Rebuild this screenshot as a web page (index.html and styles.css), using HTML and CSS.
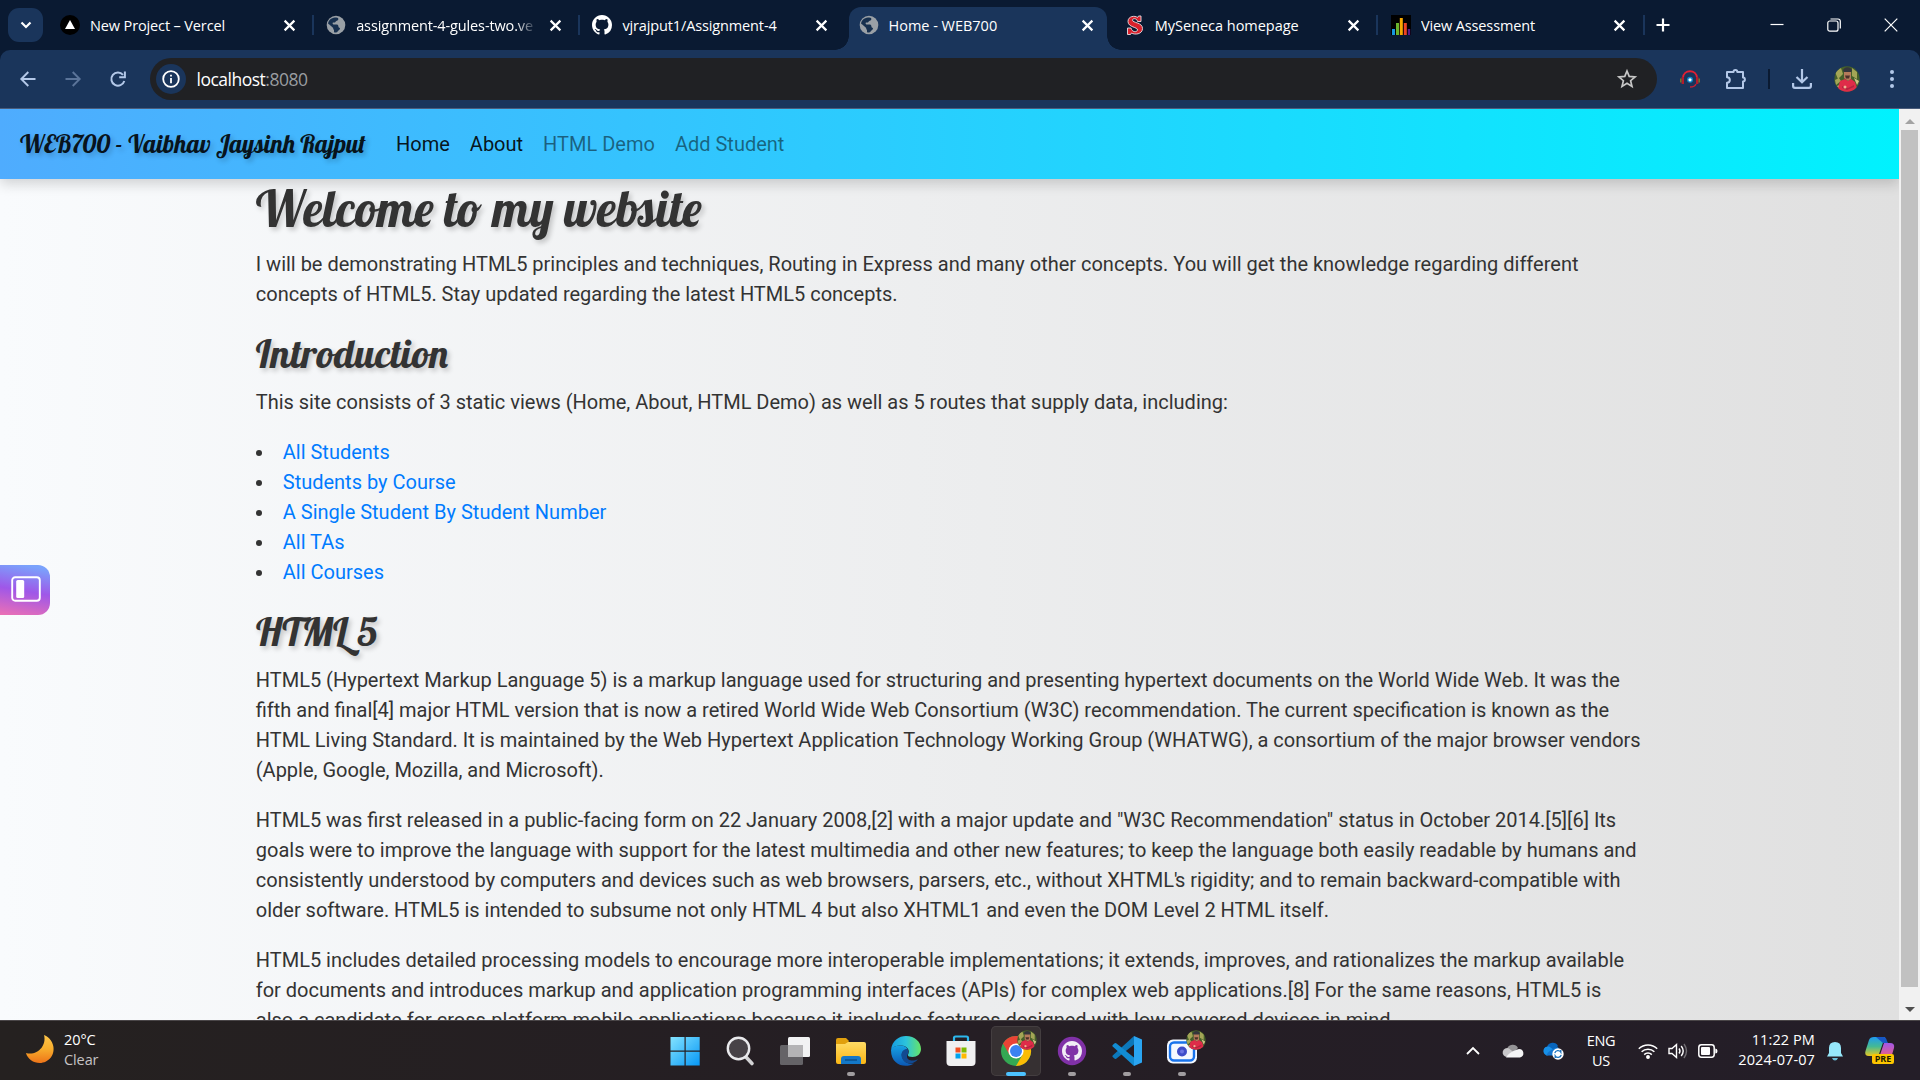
FILE: index.html
```html
<!DOCTYPE html>
<html lang="en">
<head>
<meta charset="utf-8">
<title>Home - WEB700</title>
<link rel="stylesheet" href="styles.css">
</head>
<body>
<svg class="defs" aria-hidden="true">
  <symbol id="x" viewBox="0 0 12 12"><path d="M1.5 1.5l9 9M10.500 1.500l-9 9" stroke="#fff" stroke-width="2" fill="none"/></symbol>
  <symbol id="globe" viewBox="0 0 20 20"><circle cx="10" cy="10" r="9.300" fill="#9aa0a6"/><path d="M9 2.500c3-.5 4 1 3 2.500-.5 1-2 .6-2.500 1.800-.4 1-1.500.8-2.300.8-1 .2-.6 1.600.2 1.800h3.400c1.600.2 1.600 1.400 1.700 2.500.2.900 1.600.5 1.500 1.700-.2 1.500-1.700 1.700-2.400 3-.5.900-1.600 1.200-3.600.6V14.500c-1 0-1.800-.6-1.900-1.800L2 9c.3-3.300 3-6.300 7-6.500z" fill="#17304f"/><path d="M2.200 8.500l5 4.500v4.300c-3.500-1.200-5.500-4.500-5-8.800z" fill="#9aa0a6"/></symbol>
  <symbol id="octocat" viewBox="0 0 16 16"><path d="M8 0C3.580 0 0 3.580 0 8c0 3.540 2.290 6.530 5.470 7.590.4.070.55-.17.55-.38 0-.19-.01-.82-.01-1.490-2.010.37-2.530-.49-2.690-.94-.09-.23-.48-.94-.82-1.130-.28-.15-.68-.52-.01-.53.63-.01 1.080.58 1.230.82.72 1.210 1.870.87 2.330.66.070-.52.28-.87.51-1.070-1.780-.2-3.640-.89-3.640-3.950 0-.87.31-1.590.82-2.150-.08-.2-.36-1.020.08-2.120 0 0 .67-.21 2.200.82.64-.18 1.320-.27 2-.27s1.360.09 2 .27c1.530-1.040 2.200-.82 2.200-.82.44 1.100.16 1.920.08 2.120.51.56.82 1.270.82 2.150 0 3.070-1.870 3.750-3.650 3.950.29.25.54.73.54 1.480 0 1.070-.01 1.930-.01 2.200 0 .21.15.46.55.38A8 8 0 0 0 16 8c0-4.420-3.580-8-8-8z"/></symbol>
  <symbol id="face" viewBox="0 0 26 26"><clipPath id="fc"><circle cx="13" cy="13" r="12.700"/></clipPath><g clip-path="url(#fc)"><path d="M0 0h26v26H0z" fill="#45602a"/><path d="M1 6l6-4 2 6-5 5zM18 2l5 4v7l-5-3zM1 14l4-2 2 3-5 4z" fill="#a3a556"/><path d="M20 12l5 3-2 4zM3 20l3-1v4z" fill="#d0c487"/><path d="M10 5h7v8l-3 2-4-3z" fill="#b57b5b"/><path d="M9 5c0-5 9-5 9 0l-1 1h-7z" fill="#34363c"/><path d="M11 9.500h5l-1 3h-3z" fill="#4c302a"/><path d="M6 15l5-2 3 2 3-2 4 3 2 6-4 5H6l-2-5z" fill="#df2c49"/><path d="M8 20l6 2 6-3v2l-7 3-5-2z" fill="#b3243f"/><circle cx="11" cy="21" r="1.500" fill="#f1b091"/></g></symbol>
</svg>

<div class="screen">
  <header class="tabstrip">
    <button class="tab-menu"><svg width="12" height="8" viewBox="0 0 12 8"><path d="M1.500 1.500L6 6l4.500-4.500" fill="none" stroke="#fff" stroke-width="2.200"/></svg></button>
    <div class="tabs">
      <div class="tab"><svg class="fav" viewBox="0 0 20 20"><circle cx="10" cy="10" r="10"/><path d="M10 5l5 9H5z" fill="#fff"/></svg><span class="title">New Project – Vercel</span><svg class="close"><use href="#x"/></svg></div>
      <div class="tab"><svg class="fav"><use href="#globe"/></svg><span class="title fade">assignment-4-gules-two.ve</span><svg class="close"><use href="#x"/></svg></div>
      <div class="tab nosep"><svg class="fav" fill="#fff"><use href="#octocat"/></svg><span class="title t3">vjrajput1/Assignment-4</span><svg class="close"><use href="#x"/></svg></div>
      <div class="tab nosep active"><svg class="fav"><use href="#globe"/></svg><span class="title wide">Home - WEB700</span><svg class="close"><use href="#x"/></svg></div>
      <div class="tab"><svg class="fav" viewBox="0 0 20 20"><path d="M16 1v5.500h-3.500C12 3 7.500 3 7.500 5.200c0 2.800 10 2 10 8.300 0 6-8 6.500-11 4.500l-1 1.500H2.500V13H6c1 4.500 6 4.500 6.500 2C13 12 3 12.500 3 6.500 3 1 10 .3 12.500 2.500l1-1.500z" fill="#d8202b" stroke="#e9dfe3" stroke-width=".9"/></svg><span class="title wide">MySeneca homepage</span><svg class="close"><use href="#x"/></svg></div>
      <div class="tab"><svg class="fav" viewBox="0 0 20 20"><path d="M0 0h20v20H0z"/><path d="M1 14h3v6H1z" fill="#1697e0"/><path d="M5 8h3v12H5z" fill="#6ab42d"/><path d="M8.800 3h3v17h-3z" fill="#f7a900"/><path d="M12.800 8h3v12h-3z" fill="#ee4423"/><path d="M16.800 14h2.400v6h-2.400z" fill="#5b1a8b"/></svg><span class="title">View Assessment</span><svg class="close"><use href="#x"/></svg></div>
    </div>
    <svg class="plus" width="14" height="14" viewBox="0 0 14 14"><path d="M7 .5v13M.5 7h13" stroke="#fff" stroke-width="2.200"/></svg>
    <div class="winctl">
      <span><svg width="14" height="14"><path d="M.5 6.500h13" stroke="#fff" stroke-width="1.200"/></svg></span>
      <span><svg width="14" height="14" fill="none" stroke="#fff" stroke-width="1.200"><rect x=".8" y="3" width="10.200" height="10.200" rx="2"/><path d="M3.500 1h7.500q2.300 0 2.300 2.300V10.500"/></svg></span>
      <span><svg width="14" height="14"><path d="M.7.7l12.600 12.600M13.300.7L.7 13.300" stroke="#fff" stroke-width="1.200"/></svg></span>
    </div>
  </header>

  <div class="toolbar">
    <div class="navbtns">
      <span><svg width="16" height="16" viewBox="0 0 16 16" fill="none" stroke="#b3c8e8" stroke-width="1.900"><path d="M15.500 8H1.800M8.300 1L1.300 8l7 7"/></svg></span>
      <span><svg width="16" height="16" viewBox="0 0 16 16" fill="none" stroke="#5b7499" stroke-width="1.900"><path d="M.5 8h13.700M7.700 1l7 7-7 7"/></svg></span>
      <span><svg width="16" height="16" viewBox="0 0 16 16" fill="none" stroke="#b3c8e8" stroke-width="2"><path d="M14.300 10A6.600 6.600 0 1 1 13 3.800M14.900.5v5.700H9.200"/></svg></span>
    </div>
    <div class="omnibox">
      <span class="info"><svg width="18" height="18" viewBox="0 0 18 18"><circle cx="9" cy="9" r="7.800" fill="none" stroke="#fff" stroke-width="1.800"/><path d="M8.100 8h1.800v5.200H8.100zM8.100 4.800h1.800v1.800H8.100z" fill="#fff"/></svg></span>
      <span class="url">localhost<i>:8080</i></span>
      <svg class="star" width="20" height="20" viewBox="0 0 20 20"><path d="M10 2l2.200 5.400 5.900.5-4.500 3.800 1.400 5.700-5-3.100-5 3.100 1.400-5.700L1.900 7.900l5.900-.5z" fill="none" stroke="#c7c7c7" stroke-width="1.700"/></svg>
    </div>
    <div class="ext">
      <span class="e1"><svg width="20" height="20" viewBox="0 0 20 20" fill="none"><path d="M3 9C3 0 17 0 17 9" stroke="#e41f32" stroke-width="1.800"/><path d="M2.800 8v7M17.200 8v7" stroke="#b31c2d" stroke-width="2.400"/><path d="M.8 9.500v4M19.200 9.500v4" stroke="#77782f" stroke-width="1.500"/><path d="M16 15q-1 3-6 3" stroke="#c42136" stroke-width="1.300"/><circle cx="10" cy="10.800" r="3" fill="#0f86c9"/><circle cx="10" cy="10.800" r="1.600" fill="#fff"/></svg></span>
      <span class="e2"><svg width="22" height="22" viewBox="0 0 22 22"><path d="M2 4h6.500a1.900 1.900 0 0 1 3.800 0H18v5.600a1.900 1.900 0 0 1 0 3.800V20H2v-5.200c3.800-.2 3.800-5.400 0-5.600z" fill="none" stroke="#b3c8e8" stroke-width="2" stroke-linejoin="round"/></svg></span>
      <span class="bar"></span>
      <span class="e3"><svg width="20" height="20" viewBox="0 0 20 20" fill="none" stroke="#b3c8e8" stroke-width="2.200"><path d="M10 0v13M4.500 8L10 13.300 15.500 8M1.100 14v3q0 1.800 1.800 1.800h14.200q1.800 0 1.800-1.800v-3"/></svg></span>
      <span class="e4"><svg width="26" height="26"><use href="#face"/></svg></span>
      <span class="e5"><svg width="4" height="20" fill="#b3c8e8"><circle cx="2" cy="3" r="2"/><circle cx="2" cy="10" r="2"/><circle cx="2" cy="17" r="2"/></svg></span>
    </div>
  </div>

  <div class="viewport">
    <div class="page">
      <nav class="navbar">
        <a class="brand">WEB700 - Vaibhav Jaysinh Rajput</a>
        <a class="link on">Home</a><a class="link on">About</a><a class="link">HTML Demo</a><a class="link">Add Student</a>
      </nav>
      <main class="container">
        <h1>Welcome to my website</h1>
        <p>I will be demonstrating HTML5 principles and techniques, Routing in Express and many other concepts. You will get the knowledge regarding different<br>concepts of HTML5. Stay updated regarding the latest HTML5 concepts.</p>
        <h2>Introduction</h2>
        <p>This site consists of 3 static views (Home, About, HTML Demo) as well as 5 routes that supply data, including:</p>
        <ul>
          <li><a>All Students</a></li>
          <li><a>Students by Course</a></li>
          <li><a>A Single Student By Student Number</a></li>
          <li><a>All TAs</a></li>
          <li><a>All Courses</a></li>
        </ul>
        <h2>HTML 5</h2>
        <p>HTML5 (Hypertext Markup Language 5) is a markup language used for structuring and presenting hypertext documents on the World Wide Web. It was the<br>fifth and final[4] major HTML version that is now a retired World Wide Web Consortium (W3C) recommendation. The current specification is known as the<br>HTML Living Standard. It is maintained by the Web Hypertext Application Technology Working Group (WHATWG), a consortium of the major browser vendors<br>(Apple, Google, Mozilla, and Microsoft).</p>
        <p>HTML5 was first released in a public-facing form on 22 January 2008,[2] with a major update and "W3C Recommendation" status in October 2014.[5][6] Its<br>goals were to improve the language with support for the latest multimedia and other new features; to keep the language both easily readable by humans and<br>consistently understood by computers and devices such as web browsers, parsers, etc., without XHTML<span class="apos">'</span>s rigidity; and to remain backward-compatible with<br>older software. HTML5 is intended to subsume not only HTML 4 but also XHTML1 and even the DOM Level 2 HTML itself.</p>
        <p>HTML5 includes detailed processing models to encourage more interoperable implementations; it extends, improves, and rationalizes the markup available<br>for documents and introduces markup and application programming interfaces (APIs) for complex web applications.[8] For the same reasons, HTML5 is<br>also a candidate for cross-platform mobile applications because it includes features designed with low-powered devices in mind.</p>
      </main>
    </div>
    <div class="scrollbar">
      <svg width="10" height="5"><path d="M0 5h10L5 0z" fill="#a3a3a3"/></svg>
      <div class="thumb"></div>
      <svg width="10" height="5"><path d="M0 0h10L5 5z" fill="#505050"/></svg>
    </div>
    <div class="sidebtn"><svg width="30" height="26" viewBox="0 0 30 26"><rect x="1.200" y="1.200" width="27.600" height="23.600" rx="3" fill="none" stroke="#fff" stroke-width="1.900"/><rect x="5.200" y="4" width="8" height="18" rx="1.500" fill="#fff"/></svg></div>
  </div>

  <footer class="taskbar">
    <div class="weather">
      <svg width="30" height="30" viewBox="0 0 30 30"><defs><linearGradient id="mo" x2="0" y2="1"><stop offset="0" stop-color="#ffc64a"/><stop offset=".5" stop-color="#f7ad2c"/><stop offset="1" stop-color="#ee7419"/></linearGradient></defs><path d="M19 1C31 6 32 22 21 27.500 13 31.500 3 27 1 19 12 22 22 12 19 1z" fill="url(#mo)"/></svg>
      <div><b>20°C</b><span>Clear</span></div>
    </div>
    <div class="apps">
      <span><svg width="30" height="30" viewBox="0 0 30 30"><defs><linearGradient id="wi" x2="1" y2="1"><stop stop-color="#83e3ff"/><stop offset="1" stop-color="#0797f5"/></linearGradient></defs><path d="M.5 1h14v13.500H.5zM15.700 1h14v13.500h-14zM.5 15.700h14V29.500H.5zM15.700 15.700h14V29.500h-14z" fill="url(#wi)"/></svg></span>
      <span><svg width="30" height="30" viewBox="0 0 30 30"><path d="M20.500 20.500l6.500 7" stroke="#d3d3d5" stroke-width="3.600" stroke-linecap="round"/><circle cx="13.500" cy="12.500" r="10.700" fill="#474247" stroke="#e9e9ec" stroke-width="2.400"/></svg></span>
      <span><svg width="30" height="30" viewBox="0 0 30 30"><rect y="9" width="23" height="20" rx="1.500" fill="#656367"/><rect x="8" y="1" width="22" height="20" rx="1.500" fill="#f2f2f3"/><path d="M8 9h15v12H8z" fill="#b4b3b5"/></svg></span>
      <span class="run"><svg width="32" height="30" viewBox="0 0 32 30"><defs><linearGradient id="fo" x2="0" y2="1"><stop stop-color="#ffdc65"/><stop offset="1" stop-color="#fbb614"/></linearGradient></defs><path d="M1 4q0-2 2-2h8l3 3-3 5H1z" fill="#e1a00d"/><path d="M1 8h9l3-2h16q2 0 2 2v18q0 2-2 2H3q-2 0-2-2z" fill="url(#fo)"/><path d="M6 28v-5q0-3 3-3h14q3 0 3 3v5z" fill="#1478c8"/><path d="M10 24h12" stroke="#0a518d" stroke-width="1.500"/></svg></span>
      <span><svg width="30" height="30" viewBox="0 0 30 30"><defs><linearGradient id="e1" x2="1"><stop stop-color="#159be0"/><stop offset=".5" stop-color="#2cc3dc"/><stop offset="1" stop-color="#66e466"/></linearGradient><linearGradient id="e2" x2="0" y2="1"><stop stop-color="#16a2e4"/><stop offset="1" stop-color="#0c58b5"/></linearGradient></defs><path d="M0 14C1 4.500 8 0 15 0c9 0 15 6 15 13 0 5-4 8-8.500 8-3 0-5-1-4.500-2.300 2.500-4.500-1-9.200-7-9.200C5 9.500 1 11.500 0 14z" fill="url(#e1)"/><path d="M0 14c1-3 5-4.700 10-4.500 4 .2 6 2 6.500 4-4 0-6.500 3-5.500 7 1 5 6.500 8.500 12 7-8 5-23 2.500-23-13.500z" fill="url(#e2)"/><path d="M16 12.800c-7 1-7 9.500-2 13.200 4 2.800 10 1.500 13-3-5 3-11 1.500-11-2.500 0-1.500 1-2 1.300-3.700.2-1.500-.3-3-1.300-4z" fill="#124a91"/></svg></span>
      <span><svg width="30" height="32" viewBox="0 0 30 32"><path d="M8 8V3q0-1.500 1.500-1.500h11Q22 1.500 22 3v5" fill="none" stroke="#2cb7ec" stroke-width="2.200"/><path d="M.5 6h29v21q0 4-4 4h-21q-4 0-4-4z" fill="#f0f0f1"/><path d="M9.500 12.500h5v5h-5z" fill="#f25022"/><path d="M15.500 12.500h5v5h-5z" fill="#7fba00"/><path d="M9.500 18.500h5v5h-5z" fill="#00a4ef"/><path d="M15.500 18.500h5v5h-5z" fill="#ffb900"/></svg></span>
      <span class="run current"><svg width="30" height="30" viewBox="0 0 30 30"><circle cx="15" cy="15" r="15" fill="#34a853"/><path d="M2 7.500A15 15 0 0 1 28 7.500H15L8.500 18.800z" fill="#ea4335"/><path d="M28 7.500A15 15 0 0 1 15 30l6.500-11.200L15 7.500z" fill="#fbbc05"/><circle cx="15" cy="15" r="7.600" fill="#fff"/><circle cx="15" cy="15" r="6" fill="#3b82f1"/></svg><svg class="badge" viewBox="0 0 26 26"><use href="#face" width="26" height="26"/></svg></span>
      <span class="run"><svg width="30" height="30" viewBox="0 0 30 30"><circle cx="15" cy="15" r="14.200" fill="#8031a7"/><svg x="5" y="5" width="20" height="20" fill="#f1edf6"><use href="#octocat"/></svg></svg></span>
      <span class="run"><svg width="30" height="30" viewBox="0 0 30 30"><path d="M22 0l8 3.500v23L22 30z" fill="#2aa5f2"/><path d="M22 0L.7 19.500q-.7.8 0 1.500l2 1.700q.8.500 1.500 0L22 8.500z" fill="#0c78ba"/><path d="M22 30L.7 10.500Q0 9.700.7 9l2-1.700q.8-.5 1.500 0L22 21.500z" fill="#128cd3"/></svg></span>
      <span class="run"><svg width="30" height="30" viewBox="0 0 30 30"><rect y="3.500" width="30" height="24" rx="6" fill="#f4f8fe"/><rect x="3" y="6.500" width="24" height="18" rx="4" fill="#f4f8fe" stroke="#1873ec" stroke-width="2.400"/><circle cx="15" cy="15.500" r="5" fill="#3e4cc8"/><circle cx="15" cy="15.500" r="2" fill="#6b74e4"/></svg><svg class="badge" viewBox="0 0 26 26"><use href="#face" width="26" height="26"/></svg></span>
    </div>
    <div class="tray">
      <span class="t40"><svg width="14" height="9"><path d="M1 8l6-6 6 6" fill="none" stroke="#fff" stroke-width="1.800"/></svg></span>
      <span class="t40"><svg width="22" height="14" viewBox="0 0 22 14"><path d="M5 5a6 6 0 0 1 11-1l-6 6z" fill="#949396"/><path d="M5 13a4.500 4.500 0 1 1 2-8.600l8 6.600z" fill="#c8c7c9"/><path d="M4 13.500c3-5 8-7 13-8.500a4.300 4.300 0 0 1 1 8.500z" fill="#f4f4f5"/></svg></span>
      <span class="t40"><svg width="22" height="18" viewBox="0 0 22 18"><path d="M5 5a6 6 0 0 1 11-1l-6 6z" fill="#0865bc"/><path d="M5 13.500a4.500 4.500 0 1 1 2-9l9 6z" fill="#1790e8"/><path d="M4 13.500c3-5 7-7 12-8.500l3 7-7 1.500z" fill="#1475ce"/><circle cx="16" cy="12" r="5.700" fill="#fff"/><path d="M12.800 11a3.300 3.300 0 0 1 6-.8V8m.4 5a3.300 3.300 0 0 1-6 .8V16" fill="none" stroke="#1b72bd" stroke-width="1.300"/></svg></span>
      <span class="lang">ENG<br>US</span>
      <span class="t30"><svg width="20" height="16" viewBox="0 0 20 16" fill="none" stroke="#fff" stroke-width="1.500"><path d="M.8 5.800a13 13 0 0 1 18.400 0M3.600 8.800a9 9 0 0 1 12.800 0M6.200 11.600a5.400 5.400 0 0 1 7.600 0"/><circle cx="10" cy="14" r="1.200" fill="#fff"/></svg></span>
      <span class="t30"><svg width="20" height="16" viewBox="0 0 20 16" fill="none" stroke="#fff" stroke-width="1.400"><path d="M1 5.500h3L8.500 1.500v13L4 10.500H1zM11 5.500q2 2.500 0 5M13.200 3q4 5 0 10"/><path d="M16 1q5 7 0 14" stroke="#706d72"/></svg></span>
      <span class="t30"><svg width="20" height="14" viewBox="0 0 20 14"><rect x=".8" y=".8" width="15.400" height="12.400" rx="2.600" fill="none" stroke="#fff" stroke-width="1.500"/><rect x="3" y="3" width="9" height="8" rx="1" fill="#fff"/><path d="M17.300 4.500q2.200 0 2.200 2.500t-2.200 2.500z" fill="#fff"/></svg></span>
      <span class="clock">11:22 PM<br>2024-07-07</span>
      <span class="t40"><svg width="18" height="20" viewBox="0 0 18 20"><path d="M9 1q6 0 6 6v5l2 3.500H1L3 12V7q0-6 6-6z" fill="#96e8fb"/><path d="M6 17h6q-1 2.500-3 2.500T6 17z" fill="#69bdd8"/></svg></span>
      <span class="copilot"><svg width="30" height="30" viewBox="0 0 30 30"><defs><linearGradient id="c1" x2="0" y2="1"><stop stop-color="#1f9cf0"/><stop offset=".5" stop-color="#44b994"/><stop offset="1" stop-color="#e8c921"/></linearGradient><linearGradient id="c2" x2="0" y2="1"><stop stop-color="#a157e8"/><stop offset="1" stop-color="#f2607c"/></linearGradient></defs><path d="M9 1h11l-6 17q-1 2-3 2H4q-5 0-3.500-5L4 4q1-3 5-3z" fill="url(#c1)"/><path d="M11 1h8q2 0 3 4l1 2h-5z" fill="#1757c4"/><path d="M19 7h6q5 0 4 5l-3 10H14z" fill="url(#c2)"/></svg><b>PRE</b></span>
    </div>
  </footer>
</div>
</body>
</html>
```
FILE: styles.css
```css
* { box-sizing: border-box; }
body { margin: 0; overflow: hidden; background: #0a1a32; }
svg { display: block; flex: none; overflow: visible; }
.defs { position: absolute; width: 0; height: 0; }
.screen { width: 1920px; height: 1080px; display: flex; flex-direction: column; overflow: hidden; font-family: "Open Sans", "Noto Sans", sans-serif; }

/* tab strip */
.tabstrip { height: 50px; flex: none; display: flex; align-items: center; background: #0a1a32; }
.tab-menu { width: 35px; height: 34px; margin: 0 3.500px 0 8px; padding: 0; border: 0; border-radius: 11px; background: #1a355b; display: grid; place-items: center; }
.tabs { display: flex; }
.tab { position: relative; width: 266.200px; height: 50px; display: flex; align-items: center; padding-left: 13.500px; }
.tab::after { content: ""; position: absolute; right: -1px; top: 15px; width: 2px; height: 20px; background: #1a355b; }
.tab.nosep::after { display: none; }
.tab .fav { width: 20px; height: 20px; z-index: 1; }
.tab .title { width: 181px; margin-left: 10px; padding-top: 1px; overflow: hidden; white-space: nowrap; color: #fff; font-size: 14.500px; letter-spacing: -.13px; line-height: 24px; z-index: 1; }
.tab .wide { letter-spacing: -.02px; }
.tab .fade { letter-spacing: -.13px; -webkit-mask-image: linear-gradient(90deg, #000 88%, transparent); mask-image: linear-gradient(90deg, #000 88%, transparent); }
.tab .close { width: 13px; height: 13px; margin-left: 11.500px; z-index: 1; }
.tab.active::before { content: ""; position: absolute; left: 4px; right: 4px; top: 7px; bottom: 0; border-radius: 12px 12px 0 0; background: #1a355b; }
.tab.active::after { content: ""; display: block; width: auto; height: 14px; left: -10px; right: -10px; top: 36px; background: radial-gradient(circle at 0 0, transparent 13.500px, #1a355b 14px) left / 14px 14px no-repeat, radial-gradient(circle at 100% 0, transparent 13.500px, #1a355b 14px) right / 14px 14px no-repeat; }
.plus { margin-left: 12.500px; }
.winctl { margin-left: auto; display: flex; padding-right: 1px; }
.winctl span { width: 57px; display: grid; place-items: center; }

/* toolbar */
.toolbar { height: 59px; flex: none; display: flex; align-items: center; background: #1a355b; border-bottom: 1px solid #4a5c7b; border-radius: 10px 10px 0 0; }
.navbtns { display: flex; flex: none; width: 150px; padding-left: 5px; }
.navbtns span { width: 45px; display: grid; place-items: center; }
.omnibox { flex: none; width: 1507px; height: 42px; border-radius: 21px; background: #202124; display: flex; align-items: center; padding: 0 20px 0 6px; }
.info { width: 30px; height: 30px; border-radius: 50%; background: #1a355b; display: grid; place-items: center; }
.url { flex: 1; margin-left: 10.500px; color: #fff; font-size: 17.500px; letter-spacing: -.5px; line-height: 26px; }
.url i { font-style: normal; color: #9a9da1; }
.ext { display: flex; align-items: center; }
.ext span { display: grid; place-items: center; }
.e1 { width: 66px; }
.e2 { width: 26px; }
.ext .bar { width: 2px; height: 20px; margin-left: 19px; background: #0a1a32; }
.e3 { width: 64px; }
.e4 { width: 26px; }
.e5 { width: 60px; padding-left: 4px; }

/* page area */
.viewport { position: relative; height: 911px; flex: none; display: flex; overflow: hidden; }
.page { flex: 1; overflow: hidden; background: linear-gradient(to right, #f9fbfd, #e0e0e0); font-family: Roboto, sans-serif; font-size: 20px; line-height: 30px; color: #333; }
.navbar { position: relative; height: 70px; display: flex; align-items: center; padding-left: 20px; background: linear-gradient(90deg, #4facfe, #00f2fe); box-shadow: 0 5px 12px rgba(0,0,0,.16); }
.brand { width: 366px; color: rgba(0,0,0,.9); font-size: 25px; }
.brand, h1, h2 { font-family: Lobster, "Liberation Serif", cursive; font-weight: 400; white-space: nowrap; text-shadow: 2.500px 2.500px 5px rgba(0,0,0,.2); }
.link { padding: 0 10px; color: rgba(0,0,0,.5); }
.link.on { color: rgba(0,0,0,.9); }
.container { width: 1425px; margin: 0 auto; padding: 0 18.750px; white-space: nowrap; }
h1, h2 { margin: 0 0 10px; line-height: 1.2; }
h1 { font-size: 50px; }
h2 { font-size: 40px; }
p { margin: 0 0 20px; word-spacing: -.045px; }
.apos { margin-right: -2.500px; }
ul { margin: 0 0 20px; padding: 0; list-style: none; }
li { display: flex; align-items: center; }
li::before { content: ""; width: 6px; height: 6px; margin: 2px 21px 0 0; border-radius: 50%; background: #333; }
li a { color: #007bff; }
.scrollbar { width: 21px; background: #f1f1f1; display: flex; flex-direction: column; align-items: center; padding: 10px 0 8px; gap: 6px; }
.thumb { width: 17px; height: 857px; background: #c1c1c1; }
.scrollbar svg:last-child { margin-top: auto; }
.sidebtn { position: absolute; left: 0; top: 456px; width: 50px; height: 50px; padding: 0 0 2px 1px; border-radius: 0 12px 12px 0; background: linear-gradient(190deg, #7aa2fc 8%, #9f57e8 52%, #ec70b4 100%); display: grid; place-items: center; }

/* taskbar */
.taskbar { height: 60px; flex: none; display: flex; align-items: center; background: linear-gradient(90deg, #252120, #251e24 50%, #241e28); border-top: 1px solid #4a4648; color: #fff; font-size: 14.500px; line-height: 20px; }
.weather { width: 657px; display: flex; gap: 9px; padding-left: 25px; }
.weather div { display: flex; flex-direction: column; margin-top: -2px; letter-spacing: -.1px; }
.weather svg { margin-top: 2px; }
.weather b { font-weight: 400; }
.weather span { color: #c6c3c5; }
.apps { display: flex; width: 553px; }
.apps > span { position: relative; flex: 1; height: 50px; display: grid; place-items: center; border-radius: 5px; }
.run::after { content: ""; position: absolute; bottom: 0; left: 50%; width: 8px; height: 4px; margin-left: -4px; border-radius: 2px; background: #a19da0; }
.apps .current { flex: none; width: 50px; margin: 0 2.600px; background: #363032; box-shadow: inset 0 0 0 1px #443e40; }
.current::after { width: 20px; margin-left: -10px; background: #4cc2ff; }
.apps .badge { position: absolute; right: 4px; top: 4px; width: 20px; height: 20px; }
.tray { margin-left: auto; display: flex; align-items: center; padding-right: 15px; }
.tray span { display: grid; place-items: center; }
.tray .t40 { width: 40px; }
.tray .t30 { width: 30px; }
.tray .lang { width: 60px; display: block; padding-right: 4px; text-align: center; letter-spacing: -.3px; }
.tray .clock { width: 92px; display: block; text-align: right; letter-spacing: .1px; margin-top: -2px; }
.tray .copilot { position: relative; width: 50px; }
.copilot b { position: absolute; left: 17px; top: 18px; width: 22px; height: 10px; border-radius: 2px; background: #fdc500; color: #211a00; font-size: 9px; line-height: 10px; text-align: center; }
```
